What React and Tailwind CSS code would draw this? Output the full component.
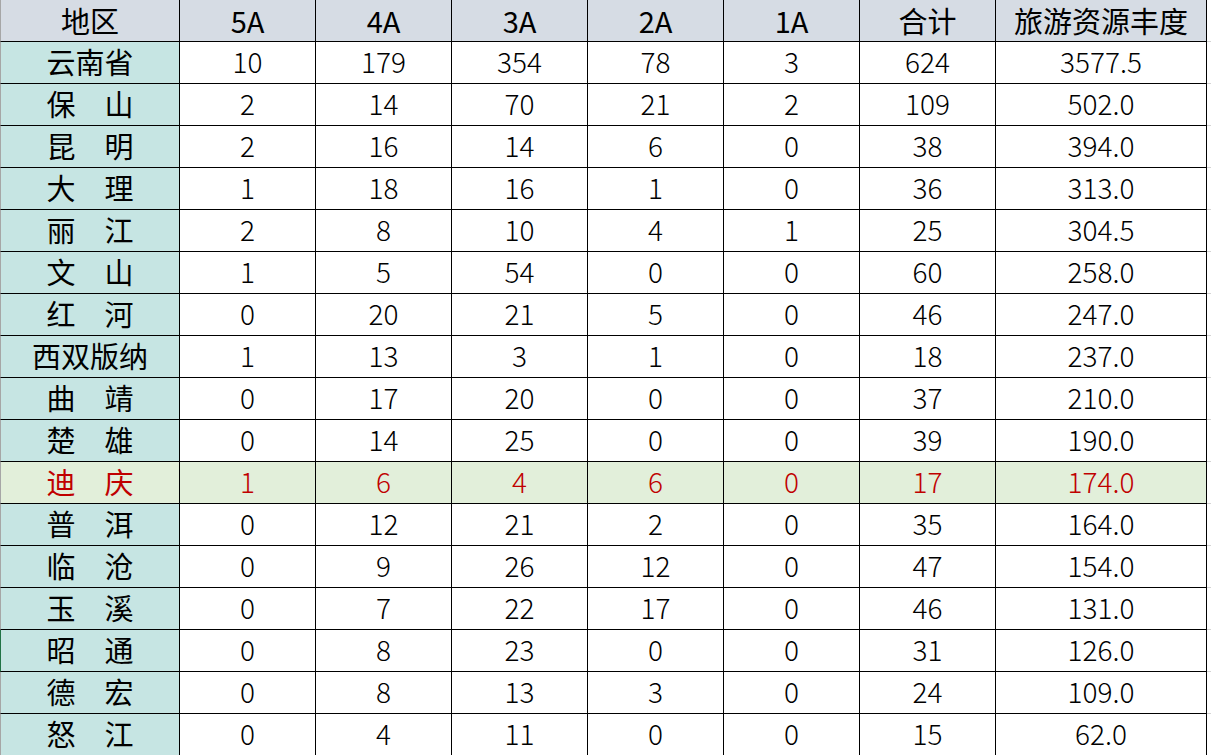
const headers = ["地区", "5A", "4A", "3A", "2A", "1A", "合计", "旅游资源丰度"];

const rows = [
  ["云南省", 10, 179, 354, 78, 3, 624, "3577.5"],
  ["保　山", 2, 14, 70, 21, 2, 109, "502.0"],
  ["昆　明", 2, 16, 14, 6, 0, 38, "394.0"],
  ["大　理", 1, 18, 16, 1, 0, 36, "313.0"],
  ["丽　江", 2, 8, 10, 4, 1, 25, "304.5"],
  ["文　山", 1, 5, 54, 0, 0, 60, "258.0"],
  ["红　河", 0, 20, 21, 5, 0, 46, "247.0"],
  ["西双版纳", 1, 13, 3, 1, 0, 18, "237.0"],
  ["曲　靖", 0, 17, 20, 0, 0, 37, "210.0"],
  ["楚　雄", 0, 14, 25, 0, 0, 39, "190.0"],
  ["迪　庆", 1, 6, 4, 6, 0, 17, "174.0"],
  ["普　洱", 0, 12, 21, 2, 0, 35, "164.0"],
  ["临　沧", 0, 9, 26, 12, 0, 47, "154.0"],
  ["玉　溪", 0, 7, 22, 17, 0, 46, "131.0"],
  ["昭　通", 0, 8, 23, 0, 0, 31, "126.0"],
  ["德　宏", 0, 8, 13, 3, 0, 24, "109.0"],
  ["怒　江", 0, 4, 11, 0, 0, 15, "62.0"],
];

const widths = ["w-[180px]", "w-[136px]", "w-[136px]", "w-[136px]", "w-[136px]", "w-[136px]", "w-[136px]", "w-[211px]"];

export default function App() {
  return (
    <div
      className="w-[1211px] h-[755px] bg-white overflow-hidden text-black"
      style={{ fontFamily: '"Noto Sans CJK SC", "Noto Sans", sans-serif' }}
    >
      {/* header */}
      <div className="flex h-[42px]">
        {headers.map((h, i) => (
          <div
            key={h}
            className={`${widths[i]} shrink-0 h-full flex items-center justify-center pb-[2px] bg-[#d6dce4] border-b border-r border-black text-[29px] leading-[32px] whitespace-nowrap ${i === 0 ? "border-l border-l-[#a6a6a6]" : ""}`}
          >
            {h}
          </div>
        ))}
        <div className="flex-1 border-b border-[#d4d4d4]" />
      </div>

      {rows.map((r, ri) => {
        const hot = r[0] === "迪　庆";
        const sel = r[0] === "昭　通";
        return (
          <div key={ri} className={`flex h-[42px] ${hot ? "text-[#c00000]" : ""}`}>
            {r.map((c, i) => (
              <div
                key={i}
                className={`${widths[i]} shrink-0 h-full flex items-center justify-center border-b border-r border-black leading-[36px] whitespace-nowrap ${
                  i === 0
                    ? `text-[29px] pb-[4px] border-l ${sel ? "border-l-[#217346]" : "border-l-[#a6a6a6]"} ${hot ? "bg-[#e2efda]" : "bg-[#c6e5e3]"}`
                    : `text-[28px] pb-[4px] font-light ${hot ? "bg-[#e2efda]" : "bg-white"}`
                }`}
              >
                {c}
              </div>
            ))}
            <div className="flex-1 border-b border-[#d4d4d4]" />
          </div>
        );
      })}
    </div>
  );
}
